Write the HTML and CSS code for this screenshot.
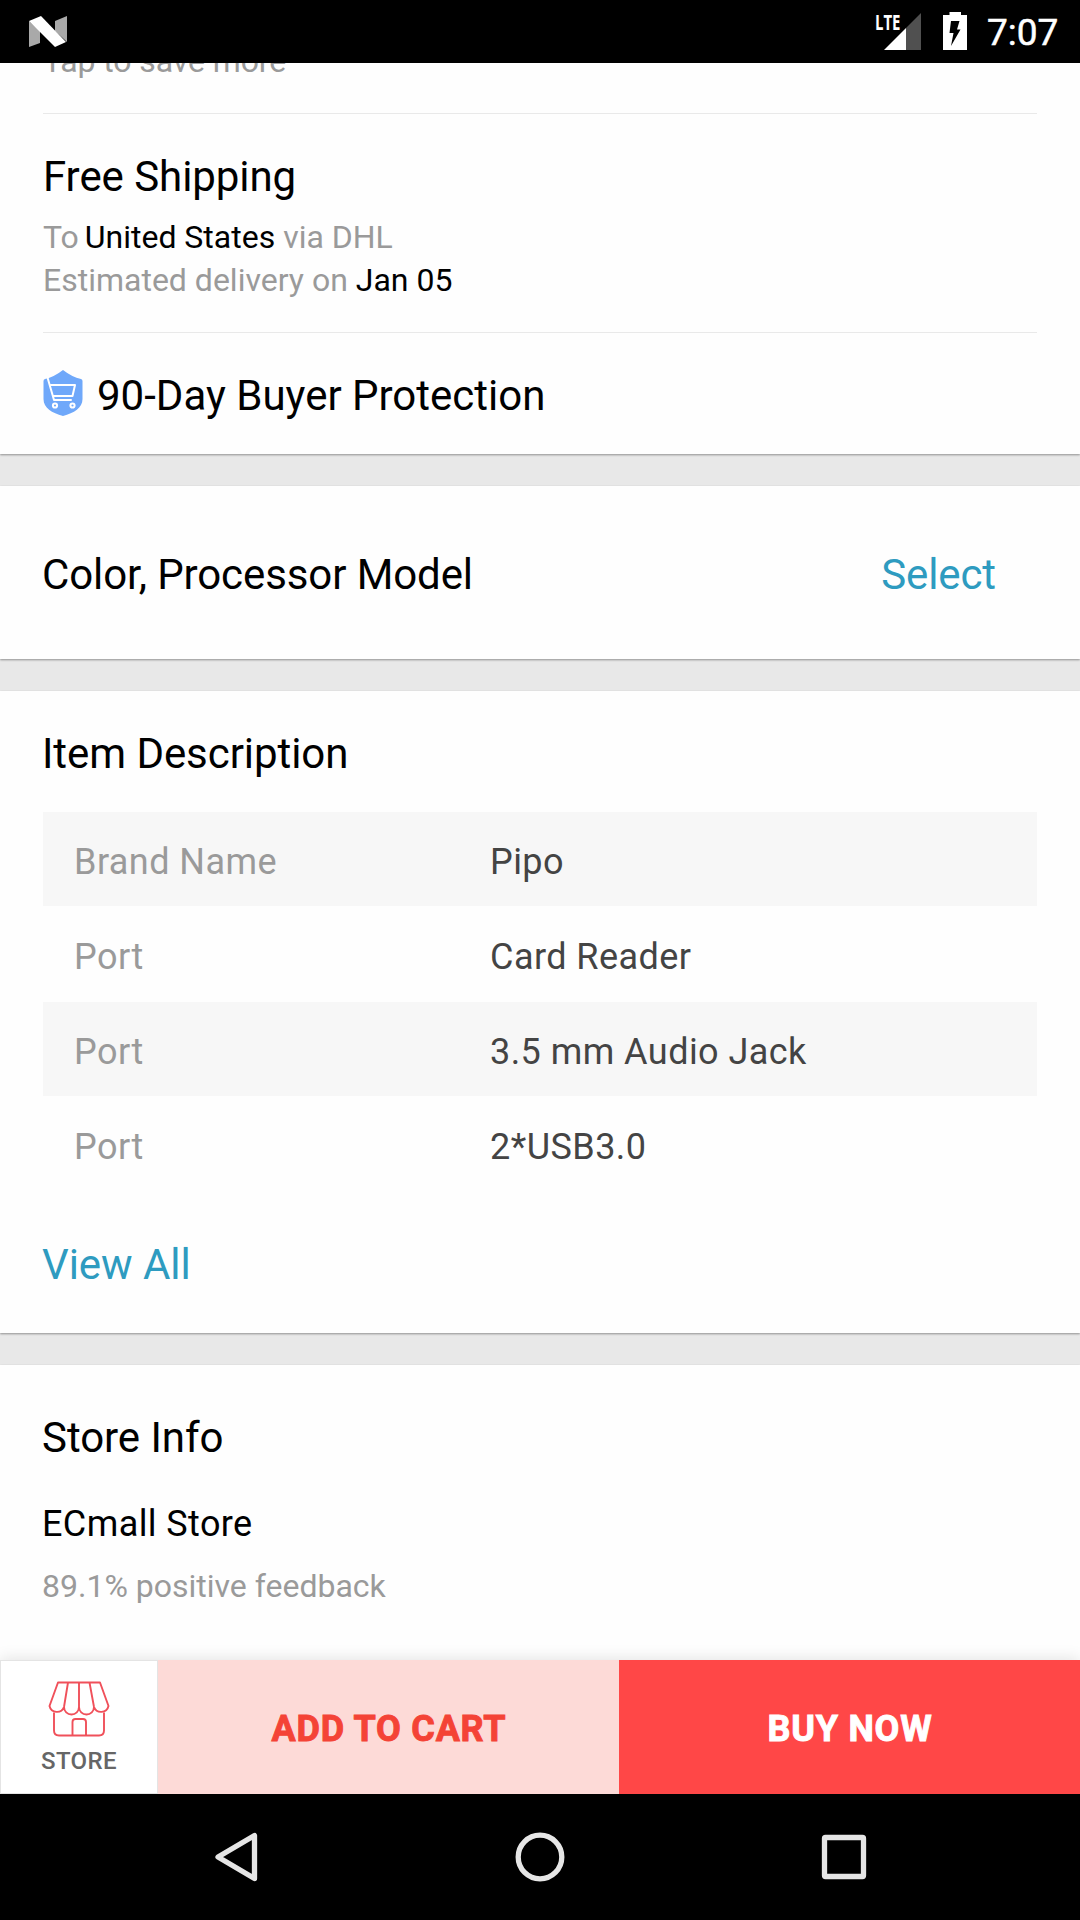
FILE: index.html
```html
<!DOCTYPE html>
<html lang="en">
<head>
<meta charset="utf-8">
<title>Item details</title>
<link rel="stylesheet" href="styles.css">
</head>
<body>
<div class="screen">
  <header class="status-bar">
    <svg class="n-logo" width="38" height="32" viewBox="0 0 38 32"><path fill="#a9a9a9" d="M0 5 11 15V27L0 31ZM26 5 38 0V26L26 15Z"/><path fill="#fff" d="M0 5 12 0 37 26 26 31Z"/></svg>
    <div class="status-icons">
      <div class="signal">
        <svg width="37" height="37" viewBox="0 0 37 37"><path fill="#505050" d="M37 0V37H22V15Z"/><path fill="#fff" d="M0 37 22 15V37Z"/></svg>
        <span class="lte">LTE</span>
      </div>
      <svg class="battery" width="24" height="38" viewBox="0 0 24 38"><path fill="#fff" d="M6.500 0H18V3H24V38H0V3H6.500Z"/><path fill="#000" d="M8 9H16.500L14 17.500H17.500L8 34L10.500 21H6.500Z"/></svg>
      <span class="clock">7:07</span>
    </div>
  </header>

  <main class="content">
    <section class="card shipping-card">
      <p class="small tap">Tap to save more</p>
      <div class="shipping">
        <h2 class="title">Free Shipping</h2>
        <p class="small">To <b class="destination">United States</b> via DHL</p>
        <p class="small">Estimated delivery on <b>Jan 05</b></p>
      </div>
      <div class="protection">
        <svg width="40" height="46" viewBox="0 0 40 46"><path fill="#6fa8fa" d="M20 0Q29 7 38 9Q39.500 9.500 39.500 11V29C39.500 38 31 43 20 46C9 43 .5 38 .5 29V11Q.5 9.500 2 9Q11 7 20 0Z"/><g fill="none" stroke="#fff" stroke-width="2" stroke-linejoin="round" stroke-linecap="round"><path d="M4.500 7.500 11 30H28M8 15H32L29.500 26H11"/><circle cx="12" cy="35.500" r="2.100"/><circle cx="29.500" cy="35.500" r="2.100"/></g></svg>
        <h2 class="title">90-Day Buyer Protection</h2>
      </div>
    </section>

    <section class="card options-card">
      <h2 class="title">Color, Processor Model</h2>
      <a class="title link">Select</a>
    </section>

    <section class="card description-card">
      <h2 class="title">Item Description</h2>
      <dl class="specs">
        <div class="spec"><dt>Brand Name</dt><dd>Pipo</dd></div>
        <div class="spec"><dt>Port</dt><dd>Card Reader</dd></div>
        <div class="spec"><dt>Port</dt><dd>3.5 mm Audio Jack</dd></div>
        <div class="spec"><dt>Port</dt><dd>2*USB3.0</dd></div>
      </dl>
      <a class="title link">View All</a>
    </section>

    <section class="card store-card">
      <h2 class="title">Store Info</h2>
      <p class="store-name">ECmall Store</p>
      <p class="small">89.1% positive feedback</p>
    </section>
  </main>

  <footer class="actions">
    <div class="store-button">
      <svg width="62" height="56" viewBox="0 0 62 56"><g fill="none" stroke="#f0505a" stroke-width="1.900" stroke-linejoin="round"><path d="M10 1.500H52L60.500 25A7.600 7.600 0 0 1 46 26A7.400 7.400 0 0 1 31 26A7.400 7.400 0 0 1 16 26A7.600 7.600 0 0 1 1.500 25ZM20 1.500 16 26M31 1.500V26M41.500 1.500 46 26"/><path d="M6 31.500V49.500Q6 54.500 11 54.500H51Q56 54.500 56 49.500V31.500M24.500 54.500V41Q24.500 38 27.500 38H35Q38 38 38 41V54.500"/></g></svg>
      <span>STORE</span>
    </div>
    <div class="button add">ADD TO CART</div>
    <div class="button buy">BUY NOW</div>
  </footer>

  <nav class="nav-bar">
    <svg width="50" height="50" viewBox="0 0 50 50"><path d="M43.500 3.500V46.500L7 25Z"/></svg>
    <svg width="50" height="50" viewBox="0 0 50 50"><circle cx="25" cy="25" r="21.800"/></svg>
    <svg width="50" height="50" viewBox="0 0 50 50"><rect x="5.500" y="5.500" width="39" height="39" rx="1"/></svg>
  </nav>
</div>
</body>
</html>
```
FILE: styles.css
```css
* { box-sizing: border-box; margin: 0; padding: 0; }
body { font-family: Roboto, sans-serif; background: #e8e8e8; }
svg { display: block; flex: none; }
.screen { width: 1080px; height: 1920px; display: flex; flex-direction: column; overflow: hidden; }

.status-bar { height: 63px; flex: none; background: #000; display: flex; justify-content: space-between; align-items: flex-start; padding: 0 20px 0 29px; }
.n-logo { margin-top: 16px; }
.status-icons { display: flex; align-items: flex-start; color: #fff; }
.signal { position: relative; margin-top: 13px; }
.lte { position: absolute; left: -9px; top: -3px; font: 700 22px/22px "Open Sans", sans-serif; transform: scaleX(.68); transform-origin: left; }
.battery { margin: 12px 20px 0 22px; }
.clock { width: 73px; font-size: 37px; font-weight: 400; -webkit-text-stroke: .5px; line-height: 50px; margin-top: 8px; white-space: nowrap; }

.content { flex: 1; min-height: 0; overflow: hidden; display: flex; flex-direction: column; gap: 32px; }
.card { flex: none; background: #fefefe; padding: 0 42px; box-shadow: 0 1px 2px #909090; }
.title { font-size: 42px; line-height: 50px; font-weight: 400; letter-spacing: -.06px; color: #000; white-space: nowrap; }
.small { font-size: 32px; line-height: 43px; color: #9a9a9a; white-space: nowrap; }
.small b { font-weight: 400; color: #000; }
.small .destination { margin-left: -2px; }
.link { color: #2e9bc0; }

.shipping-card { height: 391px; padding: 0 43px; overflow: clip; overflow-clip-margin: 8px; }
.tap { margin-top: -23px; height: 73px; letter-spacing: -.1px; }
.shipping { border: solid #e9e9e9; border-width: 1px 0; height: 220px; padding-top: 38px; }
.shipping .title { margin-bottom: 14px; }
.protection { display: flex; gap: 14px; padding-top: 37px; }
.protection .title { margin-top: 1px; letter-spacing: 0; }

.options-card { height: 173px; display: flex; justify-content: space-between; align-items: center; padding: 4px 84px 0 42px; }
.options-card .title { letter-spacing: -.1px; }
.description-card { height: 642px; padding-top: 38px; }
.specs { margin: 33px 1px 48px; }
.spec { height: 95px; display: grid; grid-template-columns: 416px 1fr; padding: 25px 0 0 31px; border-bottom: 1px solid #fefefe; font-size: 36px; letter-spacing: .45px; line-height: 50px; }
.spec:nth-child(odd) { background: #f7f7f7; }
.spec dt { color: #9a9a9a; }
.spec dd { color: #444; }
.description-card .link { display: block; }
.store-card { height: 330px; padding-top: 48px; }
.store-name { font-size: 36px; letter-spacing: .4px; line-height: 50px; margin: 36px 0 16px; }

.actions { height: 134px; flex: none; display: grid; grid-template-columns: 158px 461px 461px; position: relative; box-shadow: 0 -2px 14px rgba(0, 0, 0, .1); }
.store-button { background: #fff; border: 1px solid #e4e4e4; display: flex; flex-direction: column; align-items: center; padding-top: 20px; font-size: 24px; letter-spacing: .4px; line-height: 30px; font-weight: 500; color: #666; gap: 9px; }
.button { font-size: 36px; font-weight: 700; letter-spacing: .75px; -webkit-text-stroke: .9px; display: flex; align-items: center; justify-content: center; padding: 4px 0 0 1px; }
.add { background: #fddad7; color: #f44336; }
.buy { background: #ff4747; color: #fff; }

.nav-bar { height: 126px; flex: none; background: #000; display: flex; justify-content: space-between; align-items: center; padding: 0 211px; }
.nav-bar svg { fill: none; stroke: #e6e6e6; stroke-width: 5.300px; stroke-linejoin: round; }
```
